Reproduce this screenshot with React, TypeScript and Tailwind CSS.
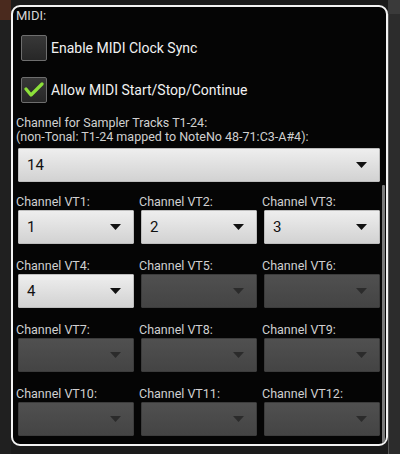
import React from 'react';

const font = { fontFamily: 'Roboto, "Liberation Sans", sans-serif' };

function Arrow({ enabled }: { enabled: boolean }) {
  return (
    <svg width="11" height="6" viewBox="0 0 11 6" className="shrink-0">
      <polygon points="0,0 11,0 5.5,6" fill={enabled ? '#111' : '#2b2b2b'} />
    </svg>
  );
}

function Dropdown({ value, enabled }: { value?: string; enabled: boolean }) {
  return (
    <div
      className={`h-[34px] flex items-center justify-between pl-[8px] pr-[12px] rounded-[1px] ${
        enabled
          ? 'bg-gradient-to-b from-[#eeeeee] to-[#d2d2d2] border border-[#bdbdbd]'
          : 'bg-gradient-to-b from-[#505050] to-[#444444] border border-[#3c3c3c]'
      }`}
    >
      <span className="text-[15px] text-[#111] leading-none">{value}</span>
      <Arrow enabled={enabled} />
    </div>
  );
}

function Checkbox({ checked, label }: { checked: boolean; label: string }) {
  return (
    <div className="flex items-center h-[26px] ml-[5px]">
      <div className="w-[26px] h-[26px] rounded-[2px] border border-[#6e6e6e] bg-gradient-to-b from-[#383838] to-[#272727] flex items-center justify-center">
        {checked && (
          <svg width="20" height="16" viewBox="0 0 20 16">
            <polyline points="2,7 7,13 18,2" fill="none" stroke="#8ce03a" strokeWidth="3.2" strokeLinecap="round" strokeLinejoin="round" />
          </svg>
        )}
      </div>
      <span className="ml-[4px] text-[14px] text-[#f2f2f2] leading-none">{label}</span>
    </div>
  );
}

const channels = [
  { n: 1, v: '1', on: true },
  { n: 2, v: '2', on: true },
  { n: 3, v: '3', on: true },
  { n: 4, v: '4', on: true },
  { n: 5, on: false },
  { n: 6, on: false },
  { n: 7, on: false },
  { n: 8, on: false },
  { n: 9, on: false },
  { n: 10, on: false },
  { n: 11, on: false },
  { n: 12, on: false },
];

export default function App() {
  return (
    <div className="w-[400px] h-[454px] bg-[#1b1b1b] flex overflow-hidden" style={font}>
      {/* background strip left */}
      <div className="w-[11px] flex flex-col">
        <div className="h-[20px] bg-[#4a2a1e]" />
        <div className="flex-1 bg-[#202020]" />
      </div>

      {/* dialog */}
      <div className="relative mt-[5px] w-[377px] h-[441px] border-2 border-[#f4f4f4] rounded-[9px] bg-[#050505] px-[3px] overflow-hidden">
        <div className="text-[13px] text-[#d6d6d6] leading-[15px] mt-[1px]">MIDI:</div>

        <div className="mt-[12px]">
          <Checkbox checked={false} label="Enable MIDI Clock Sync" />
        </div>
        <div className="mt-[16px]">
          <Checkbox checked={true} label="Allow MIDI Start/Stop/Continue" />
        </div>

        <div className="mt-[13px] text-[12.5px] text-[#d0d0d0] leading-[14px]">
          <div>Channel for Sampler Tracks T1-24:</div>
          <div>(non-Tonal: T1-24 mapped to NoteNo 48-71:C3-A#4):</div>
        </div>

        <div className="mt-[4px] ml-[2px] w-[362px]">
          <Dropdown value="14" enabled={true} />
        </div>

        <div className="mt-[12px] ml-[2px] w-[362px] grid grid-cols-3 gap-x-[7px] gap-y-[14px]">
          {channels.map((c) => (
            <div key={c.n} className="flex flex-col">
              <div className="-ml-[2px] text-[12.5px] text-[#d0d0d0] leading-[15px] mb-[1px] whitespace-nowrap">
                Channel VT{c.n}:
              </div>
              <Dropdown value={c.v} enabled={c.on} />
            </div>
          ))}
        </div>

        {/* scrollbar thumb */}
        <div className="absolute right-[1px] top-[178px] w-[3px] h-[260px] bg-[#7a7a7a] rounded-[1px]" />
      </div>

      {/* background strip right */}
      <div className="flex-1 flex flex-col bg-[#2c2c2c]">
        <div className="h-[14px] bg-[#3a3a3a]" />
        <div className="flex-1 border-l border-[#555]" />
      </div>
    </div>
  );
}
